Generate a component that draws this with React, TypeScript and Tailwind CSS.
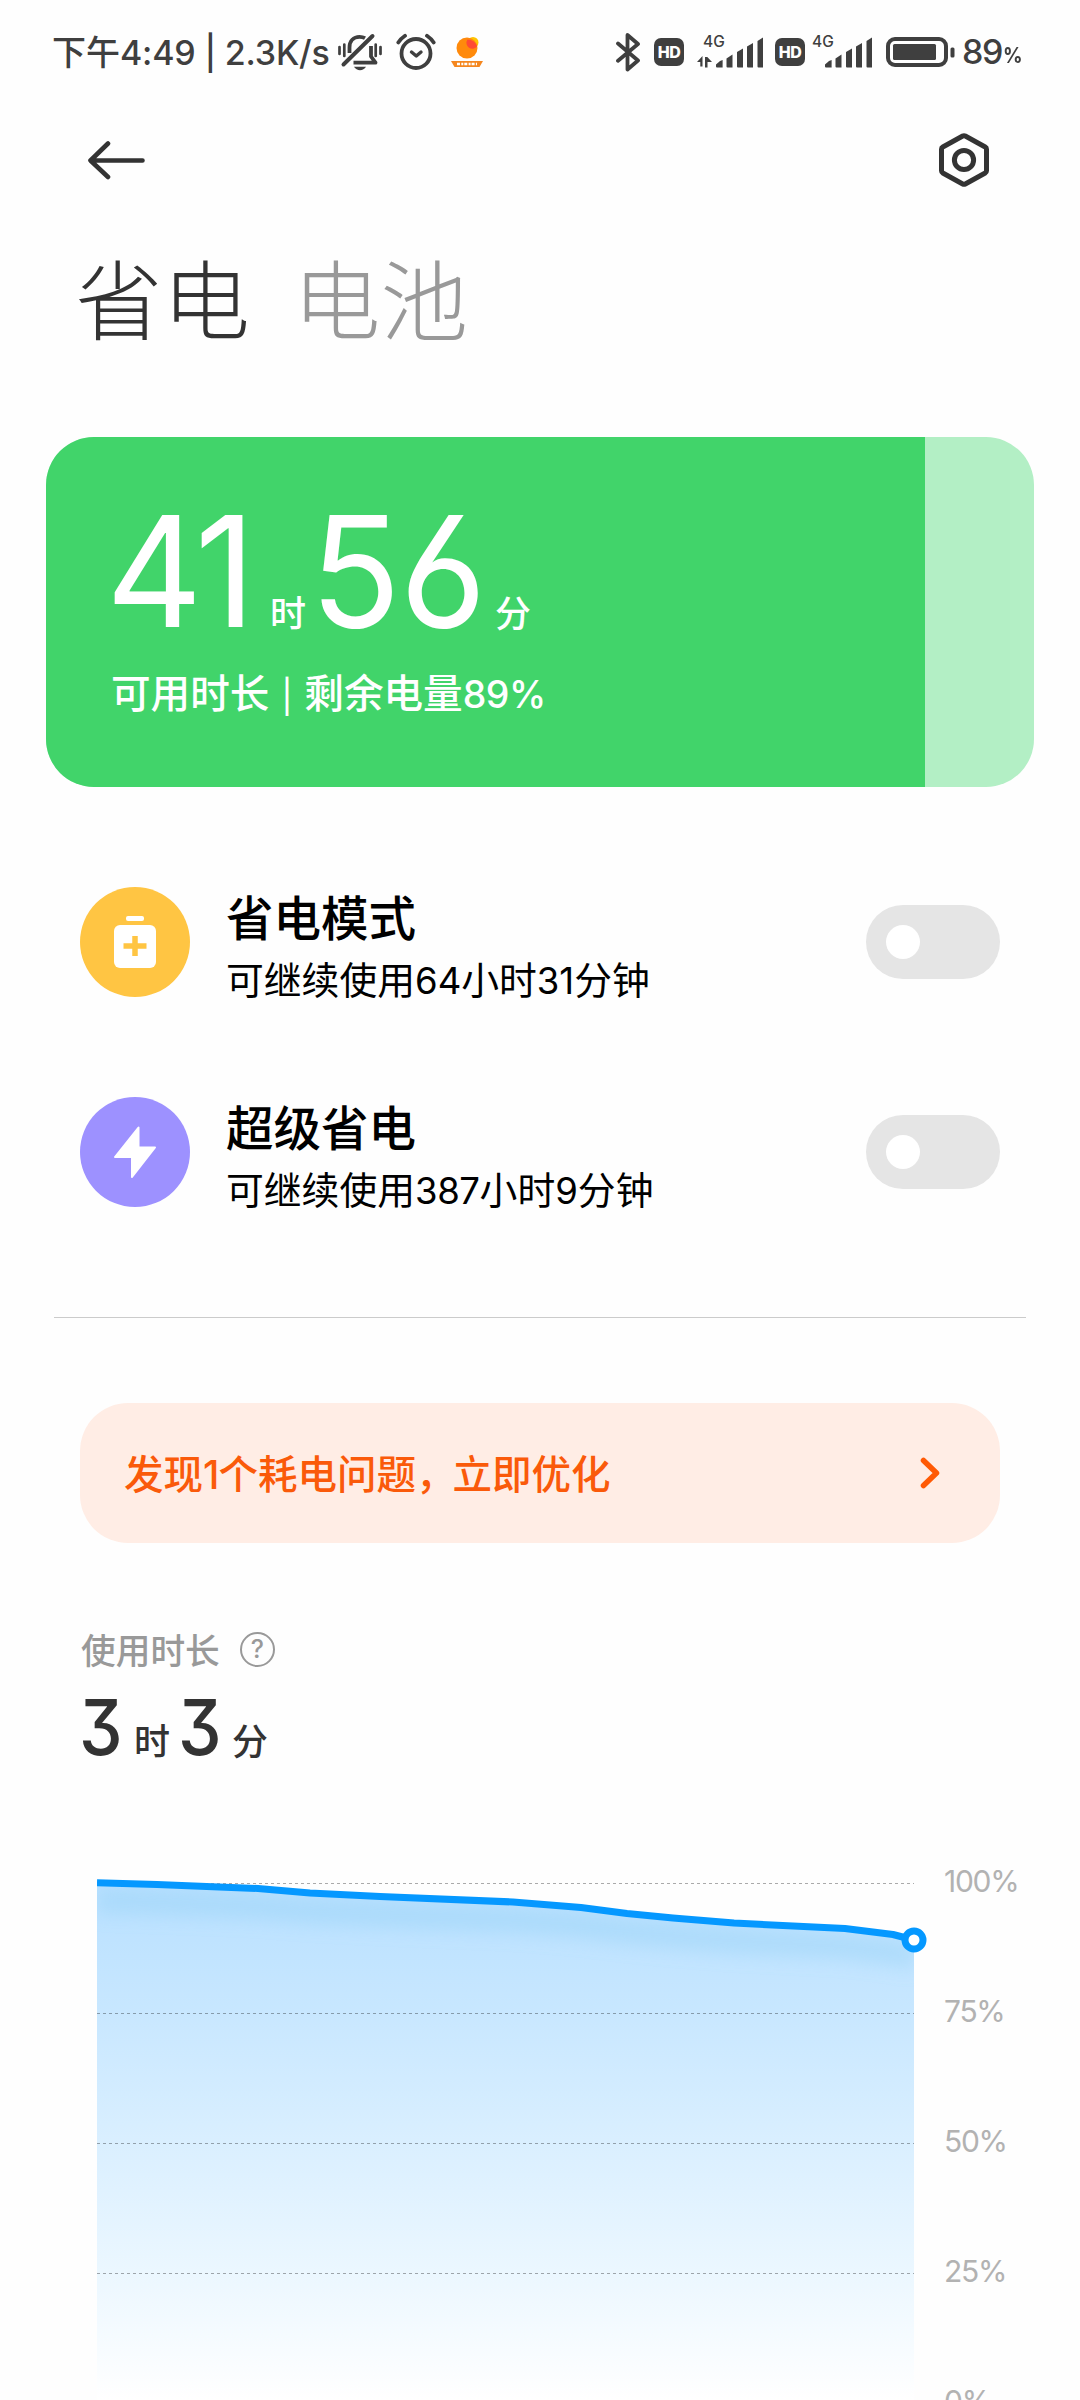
import React from "react";

type DigitProps = { children: React.ReactNode; className?: string };

// Latin digits and signs are set in Inter inside the Chinese text.
function D({ children, className = "" }: DigitProps) {
  return (
    <span className={"font-['Inter',sans-serif] leading-[0] " + className}>{children}</span>
  );
}

function MutedBell() {
  return (
    <svg className="ml-[10px] h-[40px] w-[46px] shrink-0" viewBox="0 0 46 40" fill="none" stroke="#3f3f3f" strokeLinecap="round">
      <path d="M6.5 32.5L35.5 4" strokeWidth="4" />
      <path d="M12.5 21V15.5C12.5 9 16.5 4.8 22.5 4.8C25 4.8 26.5 5.3 28 6.2" strokeWidth="3.8" strokeLinecap="butt" />
      <path d="M16.5 30.7H38.5L34 24.5V14" strokeWidth="3.8" strokeLinejoin="round" strokeLinecap="butt" />
      <path d="M17 34.7H29C27.5 37 25.5 38.2 23 38.2S18.5 37 17 34.7Z" fill="#3f3f3f" stroke="none" />
      <path d="M2.5 15V22M7.3 12.5V24M38.7 12.5V24M43.5 15V22" strokeWidth="2.7" />
    </svg>
  );
}

function AlarmClock() {
  return (
    <svg className="ml-[13px] h-[40px] w-[40px] shrink-0" viewBox="0 0 40 40" fill="none" stroke="#3f3f3f" strokeWidth="3.8" strokeLinecap="round">
      <circle cx="20" cy="21.5" r="14.5" />
      <path d="M15.5 20L20.3 24L25 20" strokeWidth="3.4" strokeLinejoin="round" />
      <path d="M2.3 10.5Q5 6.5 9 3.8M37.7 10.5Q35 6.5 31 3.8" />
    </svg>
  );
}

function SunApp() {
  return (
    <svg className="ml-[14px] mr-[1px] h-[34px] w-[34px] shrink-0" viewBox="0 0 34 34">
      <circle cx="23" cy="7.5" r="5.5" fill="#ffc400" />
      <circle cx="17" cy="13" r="10.5" fill="#ff8a0c" />
      <path d="M17.5 4.5A10.5 10.5 0 0 1 27.2 11.2A5.6 5.6 0 0 1 17.5 4.5Z" fill="#ff4b33" />
      <path d="M1 26H33L29.5 32H4.5Z" fill="#f5871f" />
      <path d="M7 29H27" stroke="#fff" strokeWidth="2.6" strokeDasharray="3 1.3 2 1" />
    </svg>
  );
}

function Bluetooth() {
  return (
    <svg className="h-[40px] w-[26px] shrink-0" viewBox="0 0 26 40" fill="none" stroke="#3f3f3f" strokeWidth="3.8" strokeLinecap="round" strokeLinejoin="round">
      <path d="M3 11.5L23 28.5L12.5 37.5V3L23 12L3 28.7" />
    </svg>
  );
}

function HdBadge({ className }: { className: string }) {
  return (
    <div className={"flex h-[28px] w-[30px] shrink-0 items-center justify-center rounded-[7px] bg-[#3f3f3f] font-['Inter',sans-serif] text-[16px] font-extrabold tracking-[-0.5px] text-white " + className}>
      HD
    </div>
  );
}

function Signal({ arrows, className }: { arrows?: boolean; className: string }) {
  return (
    <div className={"relative h-[32px] w-[66px] shrink-0 " + className}>
      <svg className="h-[32px] w-[66px]" viewBox="0 0 66 32" fill="#3f3f3f">
        <path d="M19 30.5V28.5L23 25L25.6 24V31.5H20A1 1 0 0 1 19 30.5Z" />
        <path d="M29.5 22.5L35.5 18.5V31.5H30.5A1 1 0 0 1 29.5 30.5Z" />
        <path d="M40 16L46 12.5V31.5H41A1 1 0 0 1 40 30.5Z" />
        <path d="M50 10.5L56 7V31.5H51A1 1 0 0 1 50 30.5Z" />
        <path d="M60.5 5L66 1.5V31.5H61.5A1 1 0 0 1 60.5 30.5Z" />
        {arrows && <path d="M0 26L5.5 20V30.5H3.3V26ZM8 31.5V21H10.3L15 26H10.5V31.5Z" />}
      </svg>
      <span className="absolute left-[6px] top-[-3px] font-['Inter',sans-serif] text-[15.5px] font-medium leading-[18px] text-[#3f3f3f]">4G</span>
    </div>
  );
}

function StatusBar() {
  return (
    <div className="flex h-[104px] items-center pl-[52px] text-[#3f3f3f]">
      <div className="-mt-[3px] w-[275px] whitespace-nowrap text-[34px] font-medium leading-[40px]">
        下午<D className="tracking-[-0.2px]">4:49 | 2.3K/s</D>
      </div>
      <MutedBell />
      <AlarmClock />
      <SunApp />
      <div className="ml-[130px] flex items-center">
        <Bluetooth />
        <HdBadge className="ml-[13px]" />
        <Signal arrows className="ml-[13px]" />
        <HdBadge className="ml-[12px]" />
        <Signal className="ml-[1px]" />
        <svg className="ml-[14px] h-[30px] w-[69px] shrink-0" viewBox="0 0 69 30">
          <rect x="2" y="2" width="58" height="26" rx="7" fill="none" stroke="#3f3f3f" strokeWidth="4" />
          <rect x="7" y="7" width="43" height="16" rx="1.5" fill="#3f3f3f" />
          <rect x="64.5" y="10.5" width="4" height="10" rx="1.5" fill="#3f3f3f" />
        </svg>
        <span className="ml-[7px] font-['Inter',sans-serif] text-[34px] font-medium leading-[40px] tracking-[-1.5px]">89</span>
        <span className="ml-[1px] mt-[7px] inline-block origin-left scale-x-[0.92] font-['Inter',sans-serif] text-[21px] font-bold leading-[24px]">%</span>
      </div>
    </div>
  );
}

function Header() {
  return (
    <div className="flex h-[112px] items-center justify-between pl-[87px] pr-[90px]">
      <svg className="h-[40px] w-[60px]" viewBox="0 0 60 40" fill="none" stroke="#333" strokeWidth="4.6" strokeLinecap="round" strokeLinejoin="round">
        <path d="M55.5 20.5H4M21 3.5L3.5 20.5L21 37" />
      </svg>
      <svg className="h-[56px] w-[52px]" viewBox="0 0 52 56" fill="none" stroke="#333" strokeWidth="5" strokeLinejoin="round">
        <path d="M24.7 4Q26 3.3 27.3 4L47.2 15Q48.5 15.7 48.5 17.2V38.8Q48.5 40.3 47.2 41L27.3 52Q26 52.7 24.7 52L4.8 41Q3.5 40.3 3.5 38.8V17.2Q3.5 15.7 4.8 15Z" />
        <circle cx="26" cy="28" r="9.6" />
      </svg>
    </div>
  );
}

function BatteryCard() {
  return (
    <div className="ml-[46px] flex h-[350px] w-[988px] overflow-hidden rounded-[48px] bg-[#b3efc5]">
      <div className="h-full w-[879px] bg-[#41d46a] pl-[65px] pt-[53px] text-white">
        <div className="flex h-[140px] items-baseline whitespace-nowrap leading-[140px]">
          <span className="w-[159px] text-[154px]">
            <D className="-ml-[5px] inline-block origin-left scale-x-[0.97] font-[430] tracking-[-5px] leading-[140px]">41</D>
          </span>
          <span className="w-[48px] text-[36px] font-medium">时</span>
          <span className="w-[177px] text-[154px]">
            <D className="-ml-[8px] inline-block origin-left scale-x-[0.97] font-[430] [font-feature-settings:'cv03'] tracking-[-1px] leading-[140px]">56</D>
          </span>
          <span className="text-[36px] font-medium">分</span>
        </div>
        <div className="mt-[39px] flex whitespace-nowrap text-[39.6px] font-[450] leading-[44px]">
          <span>可用时长</span>
          <span className="w-[35px] text-center text-[35px] font-medium">|</span>
          <span>剩余电量<D className="text-[37.5px] tracking-[-0.5px]">89%</D></span>
        </div>
      </div>
    </div>
  );
}

function Toggle() {
  return (
    <div className="ml-auto flex h-[74px] w-[134px] items-center rounded-full bg-[#e5e5e5] pl-[20px]">
      <div className="h-[34px] w-[34px] rounded-full bg-white" />
    </div>
  );
}

type ModeProps = { icon: React.ReactNode; color: string; title: string; children: React.ReactNode };

function ModeRow({ icon, color, title, children }: ModeProps) {
  return (
    <div className="flex h-[210px] items-center pl-[80px] pr-[80px]">
      <div className={"flex h-[110px] w-[110px] items-center justify-center rounded-full " + color}>{icon}</div>
      <div className="ml-[36px] whitespace-nowrap pt-[8px] text-black">
        <div className="text-[47.5px] font-medium leading-[64px]">{title}</div>
        <div className="text-[37.8px] leading-[60px]">{children}</div>
      </div>
      <Toggle />
    </div>
  );
}

const curve =
  "M0 9.7L60 11.5L161 15.5L213 20L283 23.5L416 29L484 34.5L530 40.5L576 45L637 50L748 55.5L796 61.5L817 67";

function Chart() {
  return (
    <div className="flex">
      <svg className="ml-[97px] h-[527px] w-[835px] shrink-0" viewBox="0 0 835 527" fill="none">
        <defs>
          <linearGradient id="area" x1="0" y1="10" x2="0" y2="527" gradientUnits="userSpaceOnUse">
            <stop offset="0" stopColor="#b8e0ff" />
            <stop offset="0.25" stopColor="#c8e7ff" />
            <stop offset="0.75" stopColor="#ebf7ff" />
            <stop offset="1" stopColor="#ffffff" />
          </linearGradient>
          <filter id="soft" x="-5%" y="-50%" width="110%" height="250%">
            <feGaussianBlur stdDeviation="9" />
          </filter>
          <clipPath id="clip">
            <path d={curve + "V527H0Z"} />
          </clipPath>
        </defs>
        <path d={curve + "V527H0Z"} fill="url(#area)" />
        <g clipPath="url(#clip)">
          <path d={curve} transform="translate(0 18)" stroke="#90d0f5" strokeOpacity="0.4" strokeWidth="24" filter="url(#soft)" />
        </g>
        <path d="M0 10.5H817M0 140.5H817M0 270.5H817M0 400.5H817" stroke="#000" strokeOpacity="0.33" strokeDasharray="3 3" />
        <path d={curve} stroke="#0598ff" strokeWidth="7" strokeLinejoin="round" />
        <circle cx="817" cy="67" r="9" fill="#fff" stroke="#0598ff" strokeWidth="7" />
      </svg>
      <div className="-mt-[57px] ml-[12px] h-[584px] overflow-hidden font-['Inter',sans-serif] text-[30px] leading-[130px] tracking-[-1.3px] text-[#b2b2b2]">
        <div className="h-[130px]">100%</div>
        <div className="h-[130px]">75%</div>
        <div className="h-[130px]">50%</div>
        <div className="h-[130px]">25%</div>
        <div className="h-[130px]">0%</div>
      </div>
    </div>
  );
}

export default function App() {
  return (
    <div className="h-[2400px] w-[1080px] overflow-hidden bg-[#fefefe] font-['Noto_Sans_CJK_SC',sans-serif]">
      <StatusBar />
      <Header />
      <div className="flex h-[221px] whitespace-nowrap pl-[75px] pt-[30px] text-[87.5px] font-light leading-[100px] text-[#333]">
        <span>省电</span>
        <span className="ml-[43px] text-[#999]">电池</span>
      </div>
      <BatteryCard />
      <div className="mt-[50px]">
        <ModeRow
          color="bg-[#ffc543]"
          title="省电模式"
          icon={
            <svg className="h-[52px] w-[42px]" viewBox="0 0 42 52">
              <rect x="12" y="0" width="18" height="5" rx="2" fill="#fff" />
              <rect x="0" y="9" width="42" height="43" rx="6" fill="#fff" />
              <path d="M21 20V40M9.5 30H32.5" stroke="#ffc543" strokeWidth="5.5" />
            </svg>
          }
        >
          可继续使用<D className="text-[36.5px]">64</D>小时<D className="text-[36.5px]">31</D>分钟
        </ModeRow>
        <ModeRow
          color="bg-[#9d91ff]"
          title="超级省电"
          icon={
            <svg className="h-[52px] w-[42px]" viewBox="0 0 42 52" fill="#fff" stroke="#fff" strokeWidth="2" strokeLinejoin="round">
              <path d="M24.5 1.5V21.5H41L18 51V31H1Z" />
            </svg>
          }
        >
          可继续使用<D className="text-[36.5px] tracking-[-0.4px]">387</D>小时<D className="text-[36.5px]">9</D>分钟
        </ModeRow>
      </div>
      <div className="ml-[54px] mt-[60px] h-px w-[972px] bg-[#cbcbcb]" />
      <div className="ml-[80px] mt-[85px] flex h-[140px] w-[920px] items-center justify-between rounded-[48px] bg-[#ffede5] pl-[44px] pr-[57px] text-[39.5px] font-[450] leading-[60px] text-[#fa5a0a]">
        <span className="-mt-[2px] whitespace-nowrap">发现<D className="tracking-[-1px]">1</D>个耗电问题<span className="-mr-[3px]">，</span>立即优化</span>
        <svg className="h-[34px] w-[24px]" viewBox="0 0 24 34" fill="none" stroke="#ff5a05" strokeWidth="5.5" strokeLinecap="round" strokeLinejoin="round">
          <path d="M4.5 4.5L17.5 17L4.5 29.5" />
        </svg>
      </div>
      <div className="mt-[74px] flex h-[64px] items-center pl-[81px] text-[34.7px] font-[450] leading-[50px] text-[#999]">
        <span>使用时长</span>
        <div className="ml-[20px] flex h-[35px] w-[35px] items-center justify-center rounded-full border-2 border-[#999] font-['Inter',sans-serif] text-[25px] leading-none">?</div>
      </div>
      <div className="mt-[8px] flex h-[100px] items-baseline whitespace-nowrap pl-[80px] text-[36px] leading-[100px] text-[#333]">
        <span className="w-[54px]"><D className="-ml-[1px] inline-block origin-left scale-x-[0.9] text-[77px] font-[450] [font-feature-settings:'cv09']">3</D></span>
        <span className="w-[45px] text-[36px] font-medium">时</span>
        <span className="w-[53px]"><D className="-ml-[1px] inline-block origin-left scale-x-[0.9] text-[77px] font-[450] [font-feature-settings:'cv09']">3</D></span>
        <span className="text-[36px] font-medium">分</span>
      </div>
      <div className="mt-[84px]">
        <Chart />
      </div>
    </div>
  );
}
